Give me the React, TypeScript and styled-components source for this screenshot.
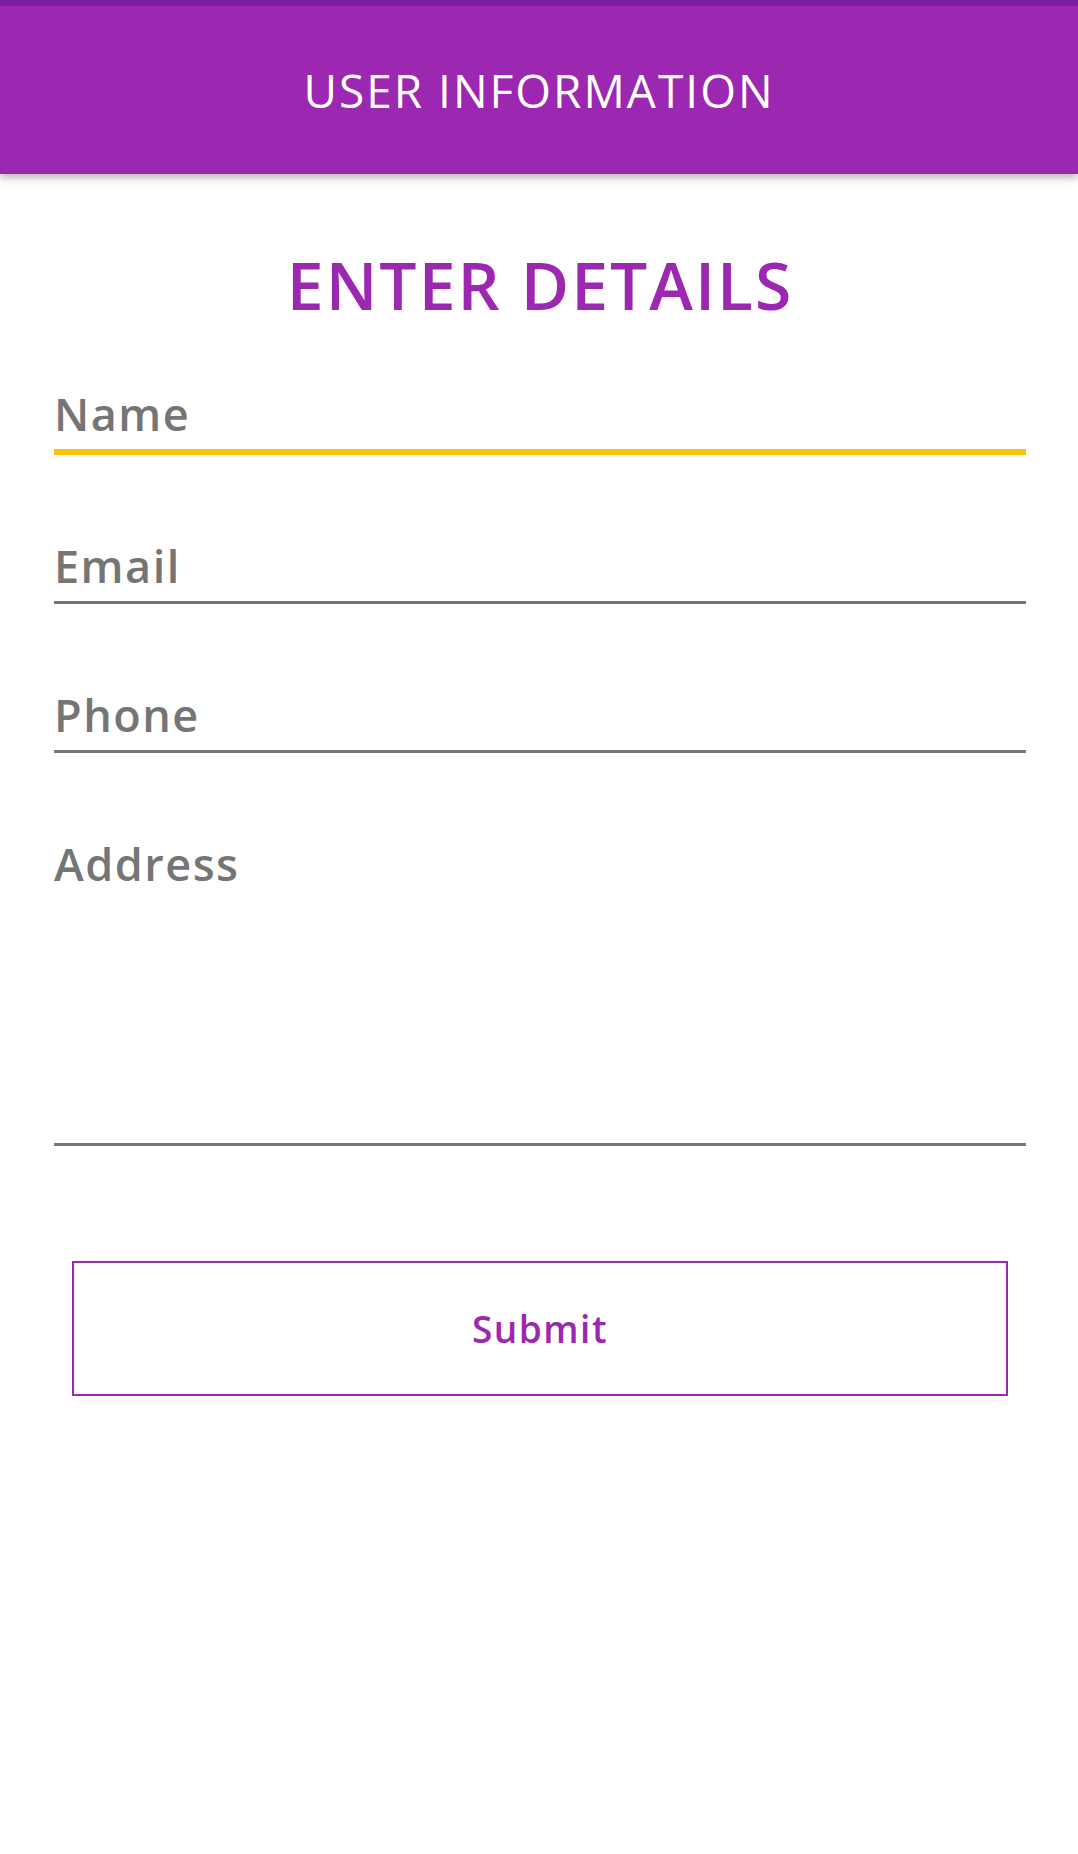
import styled, { createGlobalStyle } from 'styled-components';

const GlobalStyle = createGlobalStyle`
  body {
    margin: 0;
    background: #ffffff;
    font-family: 'Open Sans', 'Liberation Sans', sans-serif;
  }
`;

const fields = [
  { label: 'Name', focused: true },
  { label: 'Email' },
  { label: 'Phone' },
  { label: 'Address', tall: true },
];

export default function App() {
  return (
    <>
      <GlobalStyle />
      <Screen>
        <StatusStrip />
        <AppBar>
          <AppTitle>USER INFORMATION</AppTitle>
        </AppBar>
        <Form>
          <Heading>ENTER DETAILS</Heading>
          {fields.map((f) => (
            <Field key={f.label} $focused={f.focused} $tall={f.tall}>
              <Label>{f.label}</Label>
            </Field>
          ))}
          <SubmitButton type="button">Submit</SubmitButton>
        </Form>
      </Screen>
    </>
  );
}

const Screen = styled.div`
  width: 1078px;
  min-height: 1854px;
  background: #ffffff;
`;

const StatusStrip = styled.div`
  height: 6px;
  background: #7b1fa2;
`;

const AppBar = styled.header`
  position: relative;
  z-index: 1;
  height: 168px;
  display: flex;
  align-items: center;
  justify-content: center;
  background: #9c27b0;
  box-shadow: 0 4px 8px rgba(0, 0, 0, 0.28);
`;

const AppTitle = styled.h1`
  margin: 0;
  color: #ffffff;
  font-size: 46px;
  font-weight: 500;
  letter-spacing: 2px;
  line-height: 1;
`;

const Form = styled.main`
  display: flex;
  flex-direction: column;
  padding: 0 52px 0 54px;
`;

const Heading = styled.h2`
  margin: 77px 0 0;
  text-align: center;
  color: #9c27b0;
  font-size: 66px;
  font-weight: 600;
  line-height: 66px;
  letter-spacing: 2px;
`;

const Field = styled.div<{ $focused?: boolean; $tall?: boolean }>`
  margin-top: ${(p) => (p.$focused ? '70px' : '84px')};
  min-height: ${(p) => (p.$tall ? '298px' : '54px')};
  padding-bottom: 8px;
  border-bottom: ${(p) => (p.$focused ? '6px solid #ffc107' : '3px solid #757575')};
`;

const Label = styled.div`
  color: #757575;
  font-size: 45px;
  font-weight: 600;
  line-height: 54px;
  letter-spacing: 1.5px;
`;

const SubmitButton = styled.button`
  margin: 115px 18px 0;
  height: 135px;
  border: 2px solid #9c27b0;
  background: #ffffff;
  color: #9c27b0;
  font-family: 'Open Sans', 'Liberation Sans', sans-serif;
  font-size: 37px;
  font-weight: 600;
  letter-spacing: 1.5px;
  cursor: pointer;
`;
